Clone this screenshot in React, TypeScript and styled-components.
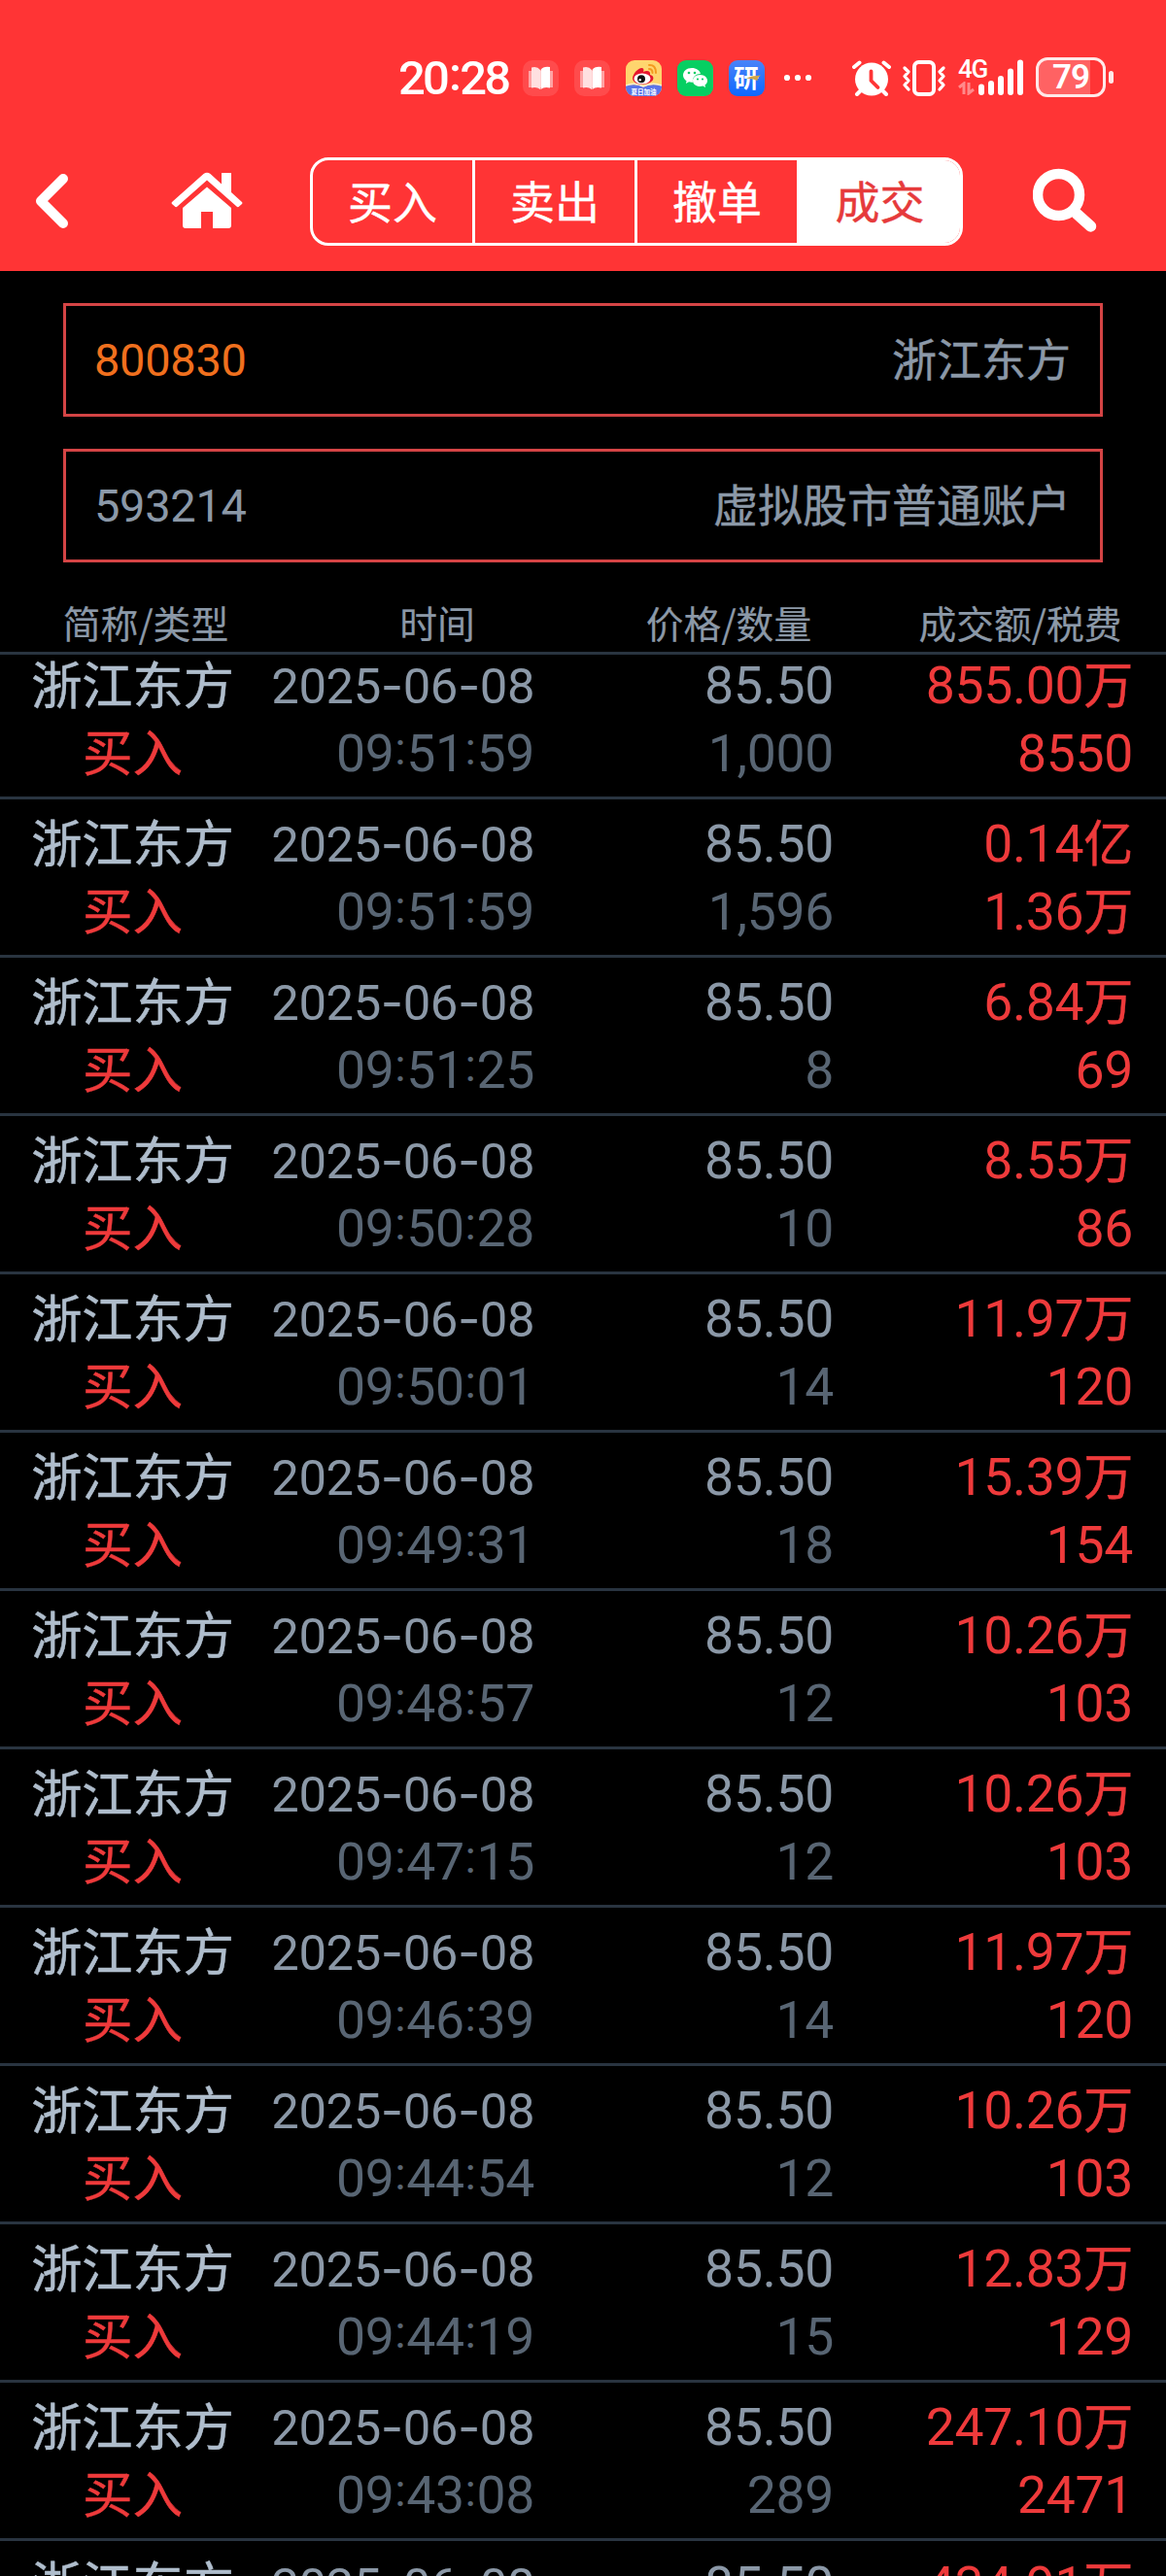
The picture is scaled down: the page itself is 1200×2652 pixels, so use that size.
import React from "react";
import styled, { createGlobalStyle } from "styled-components";

const latin = `Roboto, "Noto Sans CJK SC", sans-serif`;
const han = `"Noto Sans CJK SC", sans-serif`;

const red = "#ff3435";
const muted = "#8b98a7";

const GlobalStyle = createGlobalStyle`
  * { box-sizing: border-box; }
  body { margin: 0; background: #000; }
`;

const Screen = styled.div`
  width: 1200px;
  height: 2652px;
  overflow: hidden;
  display: flex;
  flex-direction: column;
  background: #000;
  font-family: ${latin};
`;

const StatusBar = styled.header`
  height: 162px;
  flex: none;
  display: flex;
  align-items: flex-start;
  padding: 59px 54px 0 410px;
  background: ${red};
  color: #fff;
`;

const Clock = styled.time`
  width: 128px;
  height: 44px;
  line-height: 44px;
  font-size: 49px;
  font-weight: 500;
  letter-spacing: -2.8px;
  white-space: nowrap;
`;

const ClockColon = styled.span`
  display: inline-block;
  transform: translateY(-4px);
  margin: 0 1px 0 2px;
`;

const Notifications = styled.div`
  display: flex;
  gap: 16px;
  padding-top: 3px;
  width: 339px;
`;

const AppTile = styled.svg`
  width: 37px;
  height: 37px;
  flex: none;
`;

const MoreDots = styled.svg`
  width: 30px;
  height: 37px;
  margin-left: 3px;
`;

const SystemIcons = styled.div`
  display: flex;
  align-items: flex-start;
`;

const Glyph = styled.svg<{ $w: number; $ml?: number }>`
  width: ${(p) => p.$w}px;
  height: 42px;
  margin-left: ${(p) => p.$ml ?? 0}px;
  flex: none;
`;

const Network = styled.div`
  width: 67px;
  height: 42px;
  margin-left: 12px;
  display: grid;
  grid-template-columns: 21px 46px;
`;

const NetworkLabel = styled.div`
  display: flex;
  flex-direction: column;
  font-size: 26px;
  line-height: 25px;
  font-weight: 500;
  letter-spacing: -1.2px;
`;

const Battery = styled.div`
  display: flex;
  align-items: center;
  margin-left: 13px;
  gap: 3px;
`;

const BatteryBody = styled.div`
  width: 72px;
  height: 41px;
  border: 3px solid #ffe9e9;
  border-radius: 12px;
  background: linear-gradient(90deg, #ff6263 0 53px, transparent 53px);
  display: flex;
  align-items: center;
  justify-content: center;
  font-size: 35px;
  font-weight: 600;
  letter-spacing: -1px;
  line-height: 35px;
`;

const BatteryTip = styled.div`
  width: 5px;
  height: 13px;
  border-radius: 3px;
  background: #ffe9e9;
`;

const NavBar = styled.nav`
  height: 117px;
  flex: none;
  display: flex;
  align-items: flex-start;
  background: ${red};
`;

const NavIcon = styled.svg<{ $w: number; $ml: number }>`
  width: ${(p) => p.$w}px;
  height: 90px;
  margin-left: ${(p) => p.$ml}px;
  flex: none;
`;

const Segments = styled.div`
  width: 672px;
  height: 91px;
  margin-left: 69px;
  display: grid;
  grid-template-columns: 167px 167px 167px 165px;
  border: 3px solid #fff;
  border-radius: 19px;
  overflow: hidden;
`;

const Segment = styled.button<{ $active?: boolean }>`
  appearance: none;
  border: 0;
  border-right: ${(p) => (p.$active ? 0 : 3)}px solid #fff;
  padding: 0 0 5px;
  background: ${(p) => (p.$active ? "#fff" : "transparent")};
  color: ${(p) => (p.$active ? "#e63a3b" : "#fff")};
  font-family: ${han};
  font-size: 46px;
  line-height: 60px;
  -webkit-text-stroke: 0.4px currentColor;
`;

const Fields = styled.section`
  flex: none;
  display: flex;
  flex-direction: column;
  gap: 33px;
  padding: 33px 65px 0;
`;

const Field = styled.div`
  height: 117px;
  border: 3px solid #d44445;
  display: flex;
  align-items: center;
  justify-content: space-between;
  padding: 0 30px 0 29px;
`;

const FieldCode = styled.span<{ $accent?: boolean }>`
  font-size: 47px;
  letter-spacing: -0.3px;
  line-height: 60px;
  padding-top: 1px;
  color: ${(p) => (p.$accent ? "#f0701e" : muted)};
`;

const FieldName = styled.span`
  font-family: ${han};
  font-size: 46px;
  line-height: 60px;
  padding-bottom: 7px;
  color: ${muted};
  -webkit-text-stroke: 0.4px currentColor;
`;

const TableHead = styled.div`
  flex: none;
  height: 95px;
  padding-top: 36px;
  display: grid;
  grid-template-columns: repeat(4, 1fr);
  border-bottom: 3px solid #293440;
`;

const HeadCell = styled.div`
  text-align: center;
  font-family: ${han};
  font-size: 38.8px;
  line-height: 50px;
  color: ${muted};
  -webkit-text-stroke: 0.2px currentColor;
`;

const List = styled.main`
  flex: 1;
  min-height: 0;
  overflow: hidden;
`;

const Rows = styled.div`
  margin-top: -14px;
`;

const Row = styled.div`
  height: 163px;
  border-bottom: 3px solid #293440;
  display: grid;
  grid-template-columns: 273px 277px 308px 308px;
  grid-template-rows: 70px 70px;
  padding-top: 11px;
`;

const Name = styled.div`
  text-align: center;
  font-family: ${han};
  font-size: 52.2px;
  line-height: 62px;
  color: #afbdcc;
  -webkit-text-stroke: 0.5px currentColor;
`;

const Side = styled(Name)`
  color: #ee3a3b;
  font-size: 51.5px;
`;

const Num = styled.div<{ $tone: string }>`
  text-align: right;
  font-size: 53.5px;
  line-height: 70px;
  letter-spacing: -0.3px;
  white-space: nowrap;
  color: ${(p) => p.$tone};
`;

const DateText = styled(Num)`
  font-size: 50.8px;
  letter-spacing: -0.45px;
`;

const Hyphen = styled.span`
  font-family: Inter, sans-serif;
`;

const Colon = styled.span`
  display: inline-block;
  font-size: 47px;
  line-height: 1;
  transform: translateY(-7px);
  margin: 0 0.8px;
`;

const Unit = styled.span`
  font-family: ${han};
  font-size: 51px;
  line-height: 1;
  -webkit-text-stroke: 0.5px currentColor;
`;

type Trade = [time: string, qty: string, amount: string, unit: string, fee: string, feeUnit?: string];

const trades: Trade[] = [
  ["09:51:59", "1,000", "855.00", "万", "8550"],
  ["09:51:59", "1,596", "0.14", "亿", "1.36", "万"],
  ["09:51:25", "8", "6.84", "万", "69"],
  ["09:50:28", "10", "8.55", "万", "86"],
  ["09:50:01", "14", "11.97", "万", "120"],
  ["09:49:31", "18", "15.39", "万", "154"],
  ["09:48:57", "12", "10.26", "万", "103"],
  ["09:47:15", "12", "10.26", "万", "103"],
  ["09:46:39", "14", "11.97", "万", "120"],
  ["09:44:54", "12", "10.26", "万", "103"],
  ["09:44:19", "15", "12.83", "万", "129"],
  ["09:43:08", "289", "247.10", "万", "2471"],
];

const nextAmount = "434.91";

const joinWith = (parts: string[], sep: React.ReactNode) =>
  parts.map((p, i) => (
    <React.Fragment key={i}>
      {i > 0 && sep}
      {p}
    </React.Fragment>
  ));

const FirstLine = ({ amount, unit }: { amount: string; unit: string }) => (
  <>
    <Name>浙江东方</Name>
    <DateText $tone={muted}>{joinWith(["2025", "06", "08"], <Hyphen>-</Hyphen>)}</DateText>
    <Num $tone={muted}>85.50</Num>
    <Num $tone="#ee3a3b">{amount}<Unit>{unit}</Unit></Num>
  </>
);

const BookTile = () => (
  <AppTile viewBox="0 0 37 37">
    <rect width="37" height="37" rx="10" fill="#ff4b4c" />
    <path d="M6 11H31V28H6Z" fill="#ffa3a4" />
    <path d="M9 7.5Q15 6 18 10V30Q14 27 9 28.500Z" fill="#ffe0e0" />
    <path d="M28 7Q21 6 18.500 10V30Q22 27 28 28.500Z" fill="#fff" />
  </AppTile>
);

const WeiboTile = () => (
  <AppTile viewBox="0 0 37 37">
    <defs>
      <clipPath id="wb"><rect width="37" height="37" rx="9" /></clipPath>
    </defs>
    <g clipPath="url(#wb)">
      <rect width="37" height="37" fill="#ffd56e" />
      <path d="M0 26Q10 24 18 27Q27 24 37 26V37H0Z" fill="#5b74e8" />
      <path d="M0 26Q10 22 18 27Q27 22 37 26" fill="none" stroke="#fff0cf" strokeWidth="1.500" />
    </g>
    <path d="M7 19C7 13 15 6 18 8.500C19 10 18 12 18 12C22 10 26 11 25 15C29 16 29 19 27.500 21C22 27 8 26 7 19Z" fill="#e6162d" />
    <ellipse cx="17" cy="19" rx="8.500" ry="5.600" fill="#fff" />
    <circle cx="16" cy="19.300" r="4" fill="#111" />
    <circle cx="14.700" cy="20.300" r="1.200" fill="#fff" />
    <path d="M24 5Q31 4.500 31 13M24 9Q27.500 9 27.500 13" fill="none" stroke="#f49a1f" strokeWidth="2" strokeLinecap="round" />
    <text x="18.500" y="34.500" textAnchor="middle" fontSize="6.500" fontWeight="700" fill="#fff" fontFamily="Noto Sans CJK SC, sans-serif">夏日加油</text>
  </AppTile>
);

const WechatTile = () => (
  <AppTile viewBox="0 0 37 37">
    <rect width="37" height="37" rx="9" fill="#06cf62" />
    <path d="M15 8C9.500 8 6 11.500 6 15.500C6 18 7.500 20 9.500 21.300L9 24L12 22.300C13.500 22.800 15 22.800 16 22.700C15 17 20 13.800 24 14C23.300 10.500 19.500 8 15 8Z" fill="#fff" />
    <path d="M23.500 15C19 15 16 17.800 16 21C16 24.500 19.300 27 23.500 27C24.500 27 25.500 26.900 26.400 26.600L29 28L28.500 25.500C30.300 24.400 31 22.700 31 21C31 17.800 28 15 23.500 15Z" fill="#fff" />
    <g fill="#06cf62">
      <circle cx="12" cy="13" r="1.300" /><circle cx="18" cy="13" r="1.300" />
      <circle cx="21" cy="19.500" r="1.100" /><circle cx="26" cy="19.500" r="1.100" />
    </g>
  </AppTile>
);

const YanTile = () => (
  <AppTile viewBox="0 0 37 37">
    <defs>
      <linearGradient id="yan" x1="0" y1="0" x2="0" y2="1">
        <stop offset="0" stopColor="#4a83f8" /><stop offset="1" stopColor="#0d67ff" />
      </linearGradient>
    </defs>
    <rect width="37" height="37" rx="9" fill="url(#yan)" />
    <text x="18" y="28" textAnchor="middle" fontSize="26" fontWeight="700" fill="#fff" fontFamily="Noto Sans CJK SC, sans-serif">研</text>
    <path d="M18 18.500L24 16.500L33 15.500L30 18L29.500 21L25 19.500Z" fill="#d0a648" />
  </AppTile>
);

export default function App() {
  return (
    <>
      <GlobalStyle />
      <Screen>
        <StatusBar>
          <Clock>20<ClockColon>:</ClockColon>28</Clock>
          <Notifications>
            <BookTile />
            <BookTile />
            <WeiboTile />
            <WechatTile />
            <YanTile />
            <MoreDots viewBox="0 0 30 37" fill="#fff">
              <circle cx="4" cy="18" r="3.100" /><circle cx="15" cy="18" r="3.100" /><circle cx="26" cy="18" r="3.100" />
            </MoreDots>
          </Notifications>
          <SystemIcons>
            <Glyph $w={40} viewBox="0 0 40 42">
              <g stroke="#fff" strokeWidth="4" strokeLinecap="round">
                <path d="M2 10L7.500 5.500M38 10L32.500 5.500M5 38L10 33M35 38L30 33" />
              </g>
              <circle cx="20" cy="22.500" r="17" fill="#fff" />
              <path d="M19.500 14.500V24L26.500 31" fill="none" stroke={red} strokeWidth="3.800" strokeLinecap="round" strokeLinejoin="round" />
            </Glyph>
            <Glyph $w={46} $ml={11} viewBox="0 0 46 42" fill="none" stroke="#fff" strokeLinecap="round" strokeLinejoin="round">
              <rect x="13" y="5" width="20" height="33" rx="4.500" strokeWidth="4" />
              <path d="M3 11L7 15L3 19.500L7 24L3 28.500L7 33M43 11L39 15L43 19.500L39 24L43 28.500L39 33" strokeWidth="3.300" />
            </Glyph>
            <Network>
              <NetworkLabel>
                4G
                <svg width="17" height="14" viewBox="0 0 17 14" fill="none" stroke="#ff8a8b" strokeWidth="3">
                  <path d="M1 6L6 2V13M11 1V12L16 8" />
                </svg>
              </NetworkLabel>
              <svg width="46" height="42" viewBox="0 0 46 42" stroke="#fff" strokeWidth="6" strokeLinecap="round">
                <path d="M3 30.500V36M13 27V36M23 22V36M33 14.500V36M43 5.500V36" />
              </svg>
            </Network>
            <Battery>
              <BatteryBody>79</BatteryBody>
              <BatteryTip />
            </Battery>
          </SystemIcons>
        </StatusBar>

        <NavBar>
          <NavIcon $w={36} $ml={35} viewBox="0 0 36 90">
            <path d="M30 22L7 45L30 68" fill="none" stroke="#fff" strokeWidth="10" strokeLinecap="round" strokeLinejoin="round" />
          </NavIcon>
          <NavIcon $w={74} $ml={105} viewBox="0 0 74 90" fill="#fff">
            <path d="M33.500 17Q37 14.500 40.500 17L52 27.500V16H62V36L73 46Q74 47 73 48L69.500 51Q68.500 51.500 67.500 50.500L37 23.500L6.500 50.500Q5.500 51.500 4.500 51L1 48Q0 47 1 46Z" />
            <path d="M37 30.500L62 52V70Q62 73 59 73H43V56H31V73H15Q12 73 12 70V52Z" />
          </NavIcon>
          <Segments>
            <Segment>买入</Segment>
            <Segment>卖出</Segment>
            <Segment>撤单</Segment>
            <Segment $active>成交</Segment>
          </Segments>
          <NavIcon $w={70} $ml={72} viewBox="0 0 70 90" fill="none" stroke="#fff">
            <circle cx="26.500" cy="38.500" r="21.500" strokeWidth="10.500" />
            <path d="M45 58L59.500 71" strokeWidth="11.500" strokeLinecap="round" />
          </NavIcon>
        </NavBar>

        <Fields>
          <Field>
            <FieldCode $accent>800830</FieldCode>
            <FieldName>浙江东方</FieldName>
          </Field>
          <Field>
            <FieldCode>593214</FieldCode>
            <FieldName>虚拟股市普通账户</FieldName>
          </Field>
        </Fields>

        <TableHead>
          <HeadCell>简称/类型</HeadCell>
          <HeadCell>时间</HeadCell>
          <HeadCell>价格/数量</HeadCell>
          <HeadCell>成交额/税费</HeadCell>
        </TableHead>

        <List>
          <Rows>
            {trades.map(([time, qty, amount, unit, fee, feeUnit], i) => (
              <Row key={i}>
                <FirstLine amount={amount} unit={unit} />
                <Side>买入</Side>
                <Num $tone="#586573">{joinWith(time.split(":"), <Colon>:</Colon>)}</Num>
                <Num $tone="#586573">{qty}</Num>
                <Num $tone="#ee3a3b">{fee}{feeUnit && <Unit>{feeUnit}</Unit>}</Num>
              </Row>
            ))}
            <Row>
              <FirstLine amount={nextAmount} unit="万" />
            </Row>
          </Rows>
        </List>
      </Screen>
    </>
  );
}
